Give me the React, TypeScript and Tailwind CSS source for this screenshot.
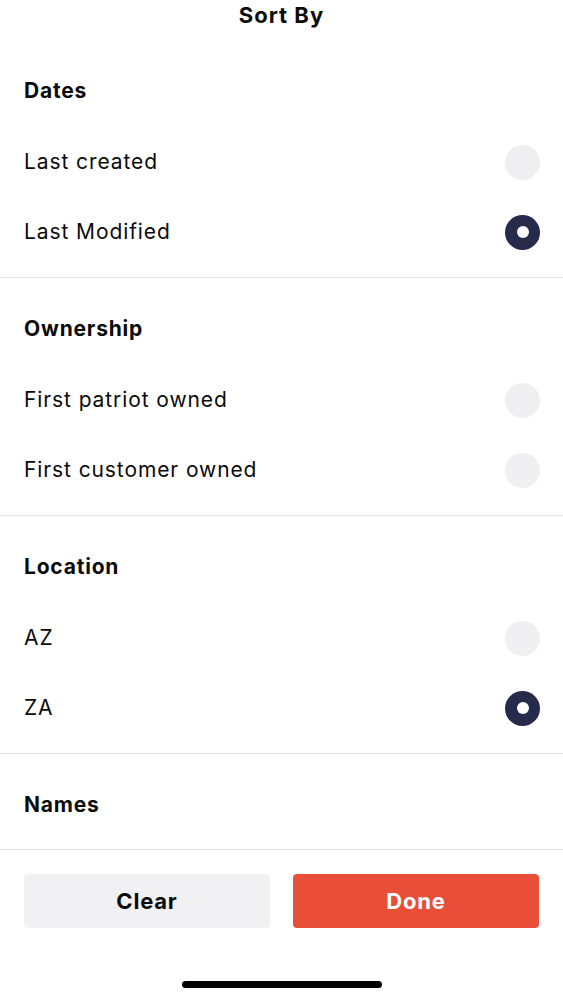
import React from "react";

type Option = { label: string; selected?: boolean };
type Section = { title: string; options: Option[] };

const sections: Section[] = [
  { title: "Dates", options: [{ label: "Last created" }, { label: "Last Modified", selected: true }] },
  { title: "Ownership", options: [{ label: "First patriot owned" }, { label: "First customer owned" }] },
  { title: "Location", options: [{ label: "AZ" }, { label: "ZA", selected: true }] },
  { title: "Names", options: [] },
];

function Radio({ selected }: { selected?: boolean }) {
  if (selected) {
    return (
      <div className="flex h-[35px] w-[35px] items-center justify-center rounded-full bg-[#262a4b]">
        <div className="h-[12px] w-[12px] rounded-full bg-white" />
      </div>
    );
  }
  return <div className="h-[35px] w-[35px] rounded-full bg-[#efeef1]" />;
}

export default function App() {
  return (
    <div
      className="flex h-[1000px] w-[563px] flex-col bg-white text-[#0b0b0b] tracking-[0.8px]"
      style={{ fontFamily: "Inter, 'Noto Sans', sans-serif" }}
    >
      <div className="h-[40px] pt-[1px] text-center text-[22px] font-bold leading-[28px] tracking-[1px]">Sort By</div>
      {sections.map((s) => (
        <div
          key={s.title}
          className={`border-b border-[#e4e4e6] px-6 pt-[37px] ${s.options.length ? "pb-[10px]" : "pb-[30px]"}`}
        >
          <div className="text-[21px] font-bold leading-[28px]">{s.title}</div>
          {s.options.length > 0 && (
            <div className="mt-[22px] flex flex-col">
              {s.options.map((o) => (
                <div key={o.label} className="flex h-[70px] items-center justify-between">
                  <span className="text-[21px] leading-[28px] tracking-[0.9px]">{o.label}</span>
                  <div className="-mr-[1px]">
                    <Radio selected={o.selected} />
                  </div>
                </div>
              ))}
            </div>
          )}
        </div>
      ))}
      <div className="flex gap-[23px] px-6 pt-[24px]">
        <button className="flex h-[54px] flex-1 items-center justify-center rounded-[4px] bg-[#f1f0f3] text-[22px] font-bold tracking-[0.8px] text-[#0b0b0b]">
          Clear
        </button>
        <button className="flex h-[54px] flex-1 items-center justify-center rounded-[4px] bg-[#e94f38] text-[22px] font-bold tracking-[0.8px] text-white">
          Done
        </button>
      </div>
      <div className="flex flex-1 items-start justify-center pt-[53px]">
        <div className="h-[7px] w-[200px] rounded-full bg-black" />
      </div>
    </div>
  );
}
